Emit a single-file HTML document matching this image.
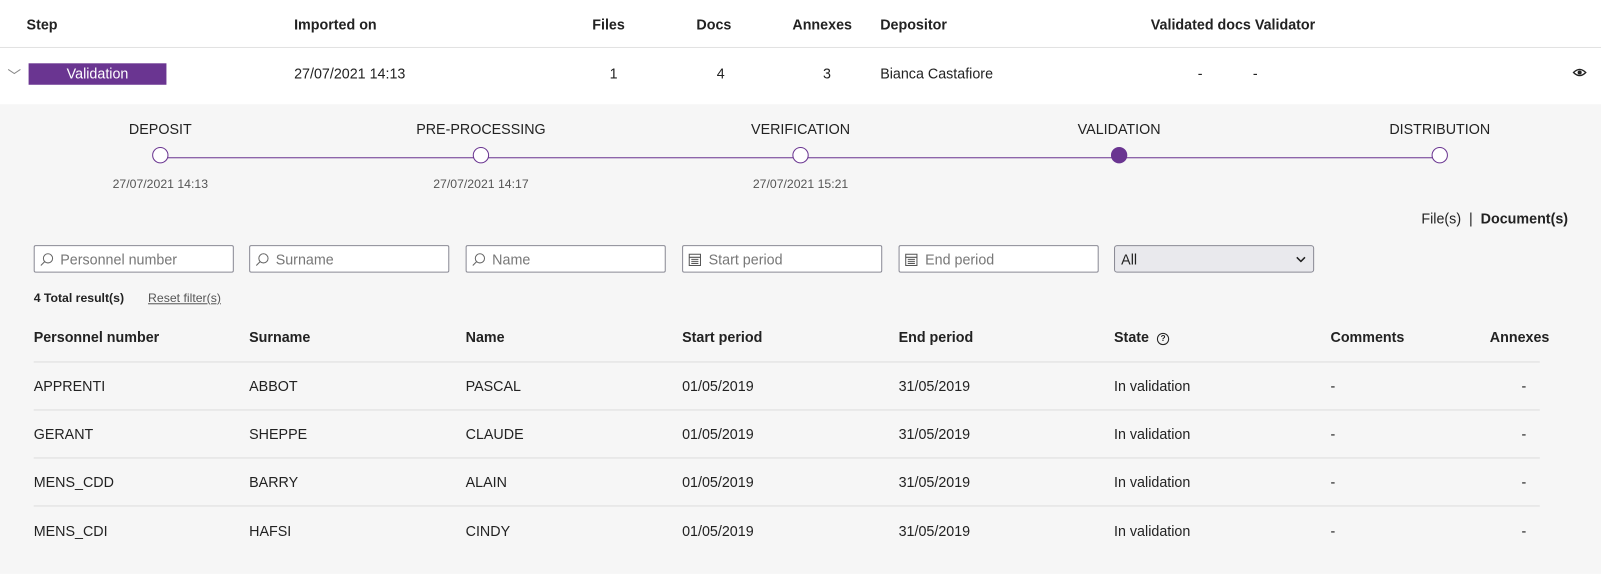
<!DOCTYPE html>
<html><head><meta charset="utf-8"><style>
*{margin:0;padding:0;box-sizing:border-box}
body{width:1601px;height:555px;background:#fff;font-family:"Liberation Sans",sans-serif;font-size:14px;color:#222;position:relative;overflow:hidden}
#w{position:absolute;left:0;top:0;width:1568px;height:544px;transform:scale(1.0211);transform-origin:0 0}
.a{position:absolute;white-space:nowrap}
.b{font-weight:bold}
.c{transform:translateX(-50%)}
.gray{position:absolute;left:0;top:102px;width:1600px;height:460px;background:#f6f6f6}
.line{position:absolute;height:1px;background:#ddd}
.dot{position:absolute;width:16px;height:16px;border:1.5px solid #6a3591;border-radius:50%;background:#fff;top:144px}
.inp{position:absolute;top:235px;height:27px;width:192px;border:1px solid #8a8a95;border-radius:2px;background:#fff;font-size:14px;color:#777;padding:5px 0 0 25px}
.inp svg{position:absolute;left:5px;top:6px}
.sm{font-size:12px;color:#555}
</style></head><body><div id="w">
<div class="a b" style="left:26px;top:16px">Step</div>
<div class="a b" style="left:288px;top:16px">Imported on</div>
<div class="a b" style="left:580px;top:16px">Files</div>
<div class="a b" style="left:682px;top:16px">Docs</div>
<div class="a b" style="left:776px;top:16px">Annexes</div>
<div class="a b" style="left:862px;top:16px">Depositor</div>
<div class="a b" style="left:1127px;top:16px">Validated docs Validator</div>
<div class="line" style="left:0;top:46px;width:1600px;background:#e2e2e2"></div>
<svg class="a" style="left:7px;top:67px" width="14" height="6"><path d="M1 1 L7 5 L13 1" stroke="#888" fill="none"/></svg>
<div class="a" style="left:28px;top:62px;width:135px;height:21px;background:#6a3591;color:#fff;text-align:center;line-height:21px">Validation</div>
<div class="a" style="left:288px;top:64px">27/07/2021 14:13</div>
<div class="a" style="left:597px;top:64px">1</div>
<div class="a" style="left:702px;top:64px">4</div>
<div class="a" style="left:806px;top:64px">3</div>
<div class="a" style="left:862px;top:64px">Bianca Castafiore</div>
<div class="a" style="left:1173px;top:64px">-</div>
<div class="a" style="left:1227px;top:64px">-</div>
<svg class="a" style="left:1540px;top:66px" width="14" height="10"><path d="M1 5 Q7 -1 13 5 Q7 11 1 5Z" stroke="#222" fill="none" stroke-width="1.3"/><circle cx="7" cy="5" r="2" fill="#222"/></svg>
<div class="gray"></div>
<div class="line" style="left:157px;top:154px;width:1254px;background:#6a3591"></div>
<div class="dot" style="left:149px"></div><div class="dot" style="left:463px"></div><div class="dot" style="left:776px"></div><div class="dot" style="left:1088px;background:#6a3591"></div><div class="dot" style="left:1402px"></div>
<div class="a c" style="left:157px;top:118px">DEPOSIT</div>
<div class="a c" style="left:471px;top:118px">PRE-PROCESSING</div>
<div class="a c" style="left:784px;top:118px">VERIFICATION</div>
<div class="a c" style="left:1096px;top:118px">VALIDATION</div>
<div class="a c" style="left:1410px;top:118px">DISTRIBUTION</div>
<div class="a c sm" style="left:157px;top:173px">27/07/2021 14:13</div>
<div class="a c sm" style="left:471px;top:173px">27/07/2021 14:17</div>
<div class="a c sm" style="left:784px;top:173px">27/07/2021 15:21</div>
<div class="a" style="left:1392px;top:206px">File(s) &nbsp;|&nbsp; <b>Document(s)</b></div>
<div class="inp" style="left:33px;top:240px;width:196px"><svg width="14" height="14"><circle cx="8" cy="6" r="4.5" stroke="#666" fill="none"/><path d="M5 9 L1 13" stroke="#666"/></svg>Personnel number</div>
<div class="inp" style="left:244px;top:240px;width:196px"><svg width="14" height="14"><circle cx="8" cy="6" r="4.5" stroke="#666" fill="none"/><path d="M5 9 L1 13" stroke="#666"/></svg>Surname</div>
<div class="inp" style="left:456px;top:240px;width:196px"><svg width="14" height="14"><circle cx="8" cy="6" r="4.5" stroke="#666" fill="none"/><path d="M5 9 L1 13" stroke="#666"/></svg>Name</div>
<div class="inp" style="left:668px;top:240px;width:196px"><svg width="14" height="14"><rect x="1" y="2" width="11" height="11" stroke="#555" fill="none"/><path d="M1 5H12M3 7h7M3 9h7M3 11h7" stroke="#555"/></svg>Start period</div>
<div class="inp" style="left:880px;top:240px;width:196px"><svg width="14" height="14"><rect x="1" y="2" width="11" height="11" stroke="#555" fill="none"/><path d="M1 5H12M3 7h7M3 9h7M3 11h7" stroke="#555"/></svg>End period</div>
<div class="a" style="left:1091px;top:240px;width:196px;height:27px;border:1px solid #8a8a95;border-radius:3px;background:#e9e9ed;padding:5px 6px;color:#222">All<svg style="position:absolute;right:7px;top:10px" width="10" height="6"><path d="M1 1L5 5L9 1" stroke="#222" fill="none" stroke-width="1.5"/></svg></div>
<div class="a b" style="left:33px;top:285px;font-size:12px">4 Total result(s)</div>
<div class="a" style="left:145px;top:285px;font-size:12px;color:#555;text-decoration:underline">Reset filter(s)</div>
<div class="a b" style="left:33px;top:322px">Personnel number</div>
<div class="a b" style="left:244px;top:322px">Surname</div>
<div class="a b" style="left:456px;top:322px">Name</div>
<div class="a b" style="left:668px;top:322px">Start period</div>
<div class="a b" style="left:880px;top:322px">End period</div>
<div class="a b" style="left:1091px;top:322px">State <span style="display:inline-block;width:12px;height:12px;border:1.3px solid #222;border-radius:50%;font-size:8px;text-align:center;line-height:10px;margin-left:4px;vertical-align:1px">?</span></div>
<div class="a b" style="left:1303px;top:322px">Comments</div>
<div class="a b" style="left:1459px;top:322px">Annexes</div>
<div class="line" style="left:33px;top:354px;width:1475px"></div>
<div class="line" style="left:33px;top:401px;width:1475px"></div>
<div class="line" style="left:33px;top:448px;width:1475px"></div>
<div class="line" style="left:33px;top:495px;width:1475px"></div>
<div class="a" style="left:33px;top:370px">APPRENTI</div><div class="a" style="left:244px;top:370px">ABBOT</div><div class="a" style="left:456px;top:370px">PASCAL</div>
<div class="a" style="left:33px;top:417px">GERANT</div><div class="a" style="left:244px;top:417px">SHEPPE</div><div class="a" style="left:456px;top:417px">CLAUDE</div>
<div class="a" style="left:33px;top:464px">MENS_CDD</div><div class="a" style="left:244px;top:464px">BARRY</div><div class="a" style="left:456px;top:464px">ALAIN</div>
<div class="a" style="left:33px;top:512px">MENS_CDI</div><div class="a" style="left:244px;top:512px">HAFSI</div><div class="a" style="left:456px;top:512px">CINDY</div>
<div class="a" style="left:668px;top:370px">01/05/2019</div><div class="a" style="left:880px;top:370px">31/05/2019</div><div class="a" style="left:1091px;top:370px">In validation</div><div class="a" style="left:1303px;top:370px">-</div><div class="a" style="left:1490px;top:370px">-</div>
<div class="a" style="left:668px;top:417px">01/05/2019</div><div class="a" style="left:880px;top:417px">31/05/2019</div><div class="a" style="left:1091px;top:417px">In validation</div><div class="a" style="left:1303px;top:417px">-</div><div class="a" style="left:1490px;top:417px">-</div>
<div class="a" style="left:668px;top:464px">01/05/2019</div><div class="a" style="left:880px;top:464px">31/05/2019</div><div class="a" style="left:1091px;top:464px">In validation</div><div class="a" style="left:1303px;top:464px">-</div><div class="a" style="left:1490px;top:464px">-</div>
<div class="a" style="left:668px;top:512px">01/05/2019</div><div class="a" style="left:880px;top:512px">31/05/2019</div><div class="a" style="left:1091px;top:512px">In validation</div><div class="a" style="left:1303px;top:512px">-</div><div class="a" style="left:1490px;top:512px">-</div>
</div></body></html>
